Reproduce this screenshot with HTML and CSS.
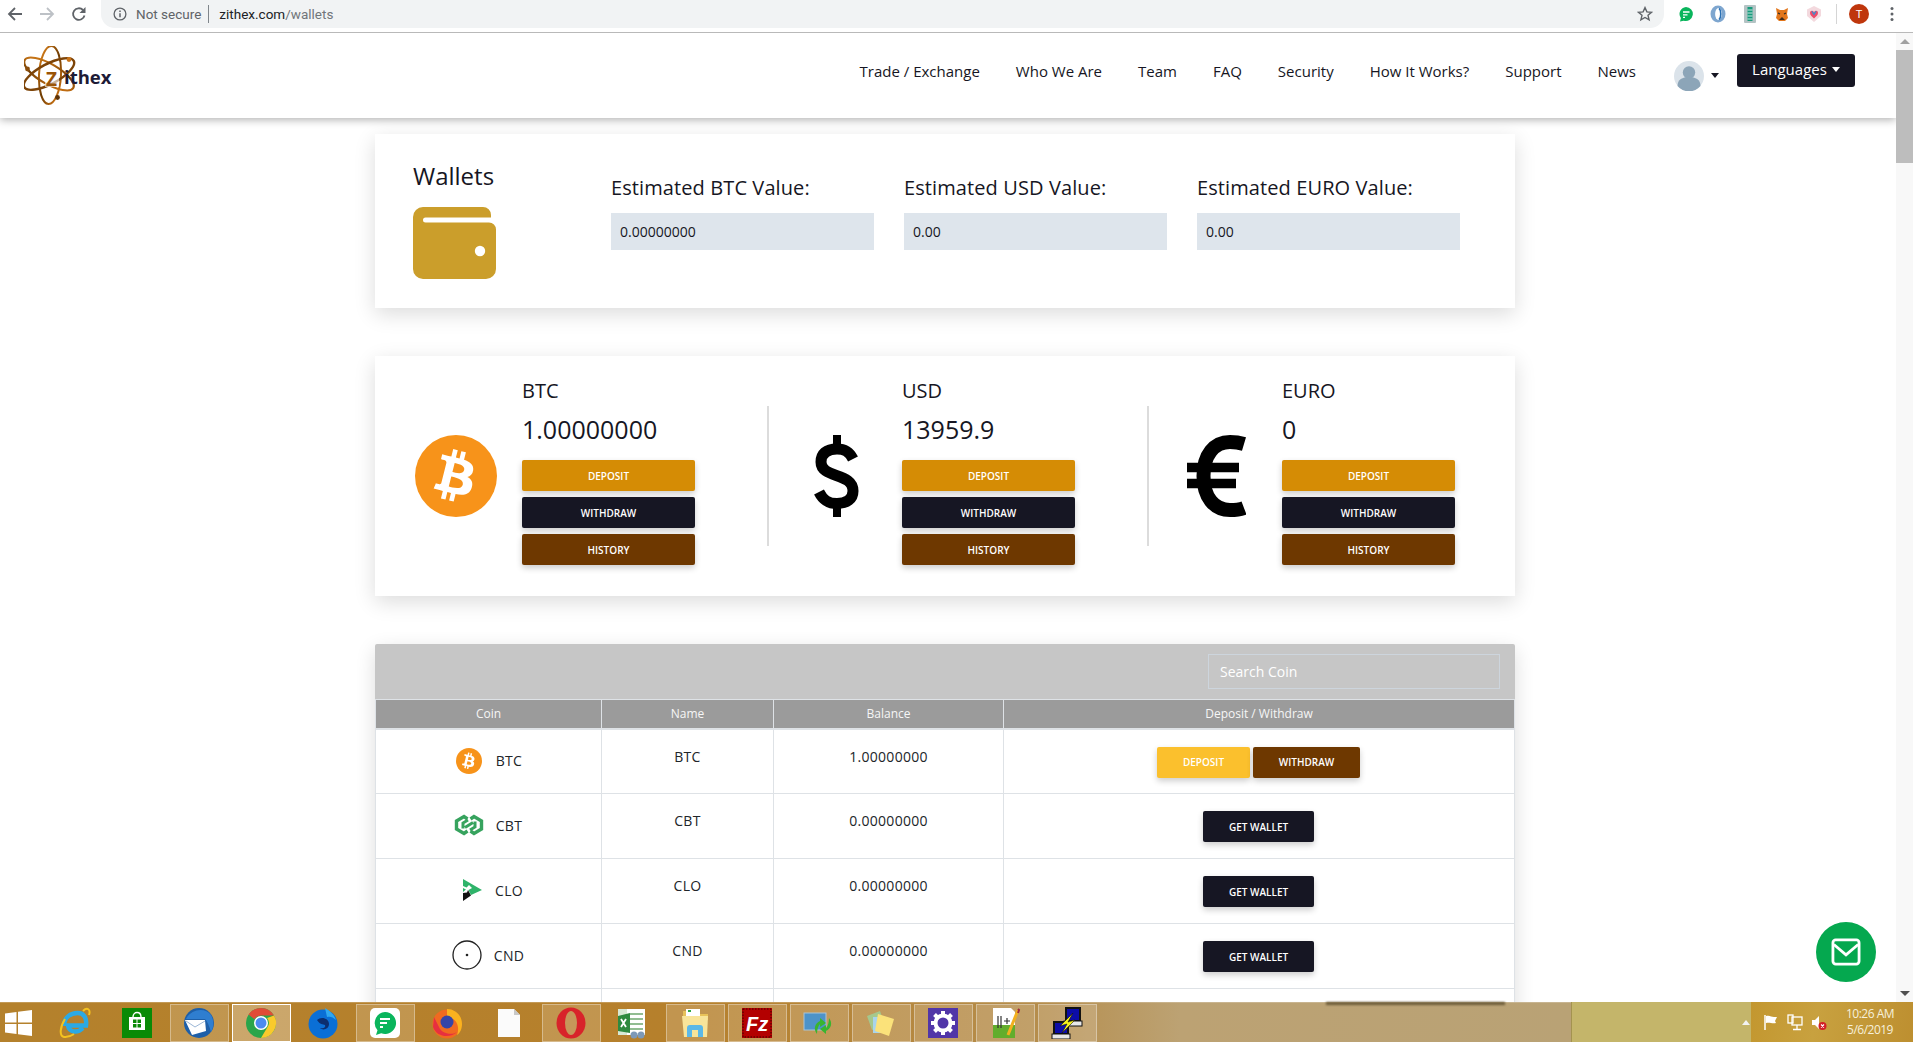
FILE: index.html
```html
<!DOCTYPE html>
<html lang="en">
<head>
<meta charset="utf-8">
<title>Zithex wallets</title>
<link rel="stylesheet" href="styles.css">
</head>
<body>
<svg class="sprite" aria-hidden="true">
  <symbol id="btc" viewBox="0 0 100 100">
    <circle cx="50" cy="50" r="50" fill="#f7931a"/>
    <path fill="#fff" transform="translate(50 50) rotate(14) scale(.178) translate(-140 -180)" d="M217.021,167.042c18.631-9.483,30.288-26.184,27.565-54.007c-3.667-38.023-36.526-50.773-78.006-54.404l-0.008-52.741h-32.139l-0.009,51.354c-8.456,0-17.076,0.166-25.657,0.338L109.19,5.897l-32.11-0.003l-0.006,52.728c-6.959,0.142-13.793,0.277-20.466,0.277v-0.156l-44.33-0.018l0.006,34.282c0,0,23.734-0.446,23.343,0c13.013,0.009,17.262,7.559,18.484,14.076l0.01,60.083v84.397c-0.573,4.09-2.984,10.625-12.083,10.637c0.414,0.364-23.379,0-23.379,0l-6.375,38.335h41.817c7.792,0.009,15.448,0.13,22.959,0.19l0.028,53.338l32.102,0.009l-0.009-52.779c8.832,0.18,17.357,0.258,25.684,0.247l-0.009,52.532h32.138l0.018-53.249c54.022-3.1,91.842-16.697,96.544-67.385C266.916,192.612,247.692,174.396,217.021,167.042z M109.535,95.294c18.126,0,75.132-5.767,75.14,32.064c-0.008,36.269-56.996,32.032-75.14,32.032V95.294z M109.521,262.393l0.014-70.664c21.778-0.006,90.085-6.261,90.094,35.32C199.638,266.932,131.313,262.388,109.521,262.393z"/>
  </symbol>
</svg>
<div class="window">
  <div class="chrome">
    <div class="chrome-nav">
      <svg class="cn" viewBox="0 0 16 16"><path d="M15 8H2M8 2L2 8l6 6" fill="none" stroke="#5f6368" stroke-width="1.8"/></svg>
      <svg class="cn" viewBox="0 0 16 16"><path d="M1 8h13M8 2l6 6-6 6" fill="none" stroke="#bdc1c6" stroke-width="1.8"/></svg>
      <svg class="cn" viewBox="0 0 16 16"><path d="M13.5 9.5A5.8 5.8 0 1 1 12 4" fill="none" stroke="#5f6368" stroke-width="1.8"/><path d="M14.5 1v6h-6z" fill="#5f6368"/></svg>
    </div>
    <div class="omnibox">
      <svg class="info" viewBox="0 0 14 14"><circle cx="7" cy="7" r="5.9" fill="none" stroke="#5f6368" stroke-width="1.3"/><path d="M7 6.2v4M7 3.6v1.4" stroke="#5f6368" stroke-width="1.5"/></svg>
      <span class="not-secure">Not secure</span>
      <span class="omni-sep"></span>
      <span class="url">zithex.com<span class="url-path">/wallets</span></span>
      <svg class="star" viewBox="0 0 16 16"><path d="M8 1.6l1.9 4.3 4.6.4-3.5 3 1.1 4.6L8 11.5l-4.1 2.4 1.1-4.6-3.5-3 4.6-.4z" fill="none" stroke="#5f6368" stroke-width="1.4"/></svg>
    </div>
    <div class="extensions">
      <svg class="ext" viewBox="0 0 18 18"><path d="M9 2a7 7 0 1 1-2.200 13.700L3 16.500l.9-3.400A7 7 0 0 1 9 2z" fill="#0ab55c"/><path d="M6 7h6.500M6 9.800h4.500M6 12.400h2" stroke="#fff" stroke-width="1.3"/></svg>
      <svg class="ext" viewBox="0 0 18 18"><ellipse cx="9" cy="9" rx="7.500" ry="8.500" fill="#7ea6cf"/><ellipse cx="9.500" cy="9" rx="3.400" ry="6" fill="#fff"/><path d="M10 3.400c2.400 2 2.400 9 0 11.200" stroke="#2a70b4" stroke-width="1.600" fill="none"/></svg>
      <svg class="ext" viewBox="0 0 18 18"><rect x="3" y="0" width="12" height="18" rx="1" fill="#b4c3c4"/><rect x="6.500" y="2" width="5" height="14" fill="#179a7c"/><path d="M6.500 5h5M6.500 8h5M6.500 11h5M6.500 14h5" stroke="#d6efe8" stroke-width=".9"/></svg>
      <svg class="ext" viewBox="0 0 18 18"><path d="M3 3l4 2h4l4-2-1 6 1 4-3 3H6l-3-3 1-4z" fill="#e2761b"/><path d="M6 15l3-3 3 3z" fill="#3c2a1c"/><path d="M5 8l2 1M13 8l-2 1" stroke="#2b2b2b" stroke-width="1.200"/></svg>
      <svg class="ext" viewBox="0 0 18 18"><path d="M9 1l7 3.400V11l-7 6-7-6V4.400z" fill="#f3d9de"/><path d="M5 8a2 2 0 0 1 4-.6A2 2 0 0 1 13 8c0 2.400-2.400 4-4 5.400C7.400 12 5 10.400 5 8z" fill="#ec4c6a"/><path d="M7 6.400l2 3 2-3" fill="none" stroke="#3c8fd0" stroke-width="1.300"/></svg>
      <span class="ext-sep"></span>
      <span class="profile">T</span>
      <svg class="dots" viewBox="0 0 4 16"><circle cx="2" cy="2.500" r="1.500"/><circle cx="2" cy="8" r="1.500"/><circle cx="2" cy="13.500" r="1.500"/></svg>
    </div>
  </div>

  <div class="viewport">
    <div class="page">
      <header class="site-header">
        <svg class="logo" viewBox="0 0 92 59">
          <defs>
            <linearGradient id="orbit" x1="0" y1="0" x2="1" y2="1">
              <stop offset="0" stop-color="#e88a1e"/><stop offset=".5" stop-color="#6e3b02"/><stop offset="1" stop-color="#e08018"/>
            </linearGradient>
          </defs>
          <ellipse cx="26" cy="29" rx="11" ry="29" transform="rotate(3 26 29)" fill="none" stroke="url(#orbit)" stroke-width="2"/>
          <ellipse cx="25" cy="28" rx="28" ry="10" transform="rotate(30 25 28)" fill="none" stroke="url(#orbit)" stroke-width="2.200"/>
          <ellipse cx="25" cy="28" rx="28" ry="10" transform="rotate(-28 25 28)" fill="none" stroke="#7d4408" stroke-width="2.400"/>
          <circle cx="3.500" cy="23" r="2.400" fill="#8a4d0b"/>
          <circle cx="45" cy="13.500" r="2.400" fill="#c9741a"/>
          <circle cx="33.500" cy="51.500" r="2.400" fill="#5d3206"/>
          <rect x="21" y="24" width="14" height="17" fill="#fff" opacity=".6"/>
          <text class="logo-z" x="22" y="39.500">Z</text>
          <text class="logo-word" x="40" y="38">ithex</text>
        </svg>
        <nav class="site-nav">
          <a class="nav-link">Trade / Exchange</a>
          <a class="nav-link">Who We Are</a>
          <a class="nav-link">Team</a>
          <a class="nav-link">FAQ</a>
          <a class="nav-link">Security</a>
          <a class="nav-link">How It Works?</a>
          <a class="nav-link">Support</a>
          <a class="nav-link">News</a>
        </nav>
        <div class="user-menu">
          <svg class="avatar" viewBox="0 0 30 30"><circle cx="15" cy="15" r="15" fill="#dbe3ea"/><circle cx="15" cy="11.500" r="6.200" fill="#8ca5b8"/><path d="M3.500 25c0-6.500 5-9 11.500-9s11.500 2.500 11.500 9a15 15 0 0 1-23 0z" fill="#8ca5b8"/></svg>
          <span class="caret"></span>
        </div>
        <button class="lang-btn">Languages<span class="caret caret-light"></span></button>
      </header>

      <main class="content">
        <section class="card wallet-card">
          <div class="wallet-head">
            <h1 class="wallet-title">Wallets</h1>
            <svg class="wallet-icon" viewBox="0 0 83 72"><path fill="#cb9e2b" d="M10 0H70a8 8 0 0 1 8 8V10.500H12.500a2.500 2.500 0 0 0 0 5H76a7 7 0 0 1 7 7V62a10 10 0 0 1-10 10H10A10 10 0 0 1 0 62V10A10 10 0 0 1 10 0Z"/><circle cx="67" cy="44" r="5.200" fill="#fff"/></svg>
          </div>
          <div class="estimate">
            <label class="est-label">Estimated BTC Value:</label>
            <div class="est-value">0.00000000</div>
          </div>
          <div class="estimate">
            <label class="est-label">Estimated USD Value:</label>
            <div class="est-value">0.00</div>
          </div>
          <div class="estimate">
            <label class="est-label">Estimated EURO Value:</label>
            <div class="est-value">0.00</div>
          </div>
        </section>

        <section class="card balance-card">
          <div class="balance">
            <div class="balance-icon"><svg class="btc-big"><use href="#btc"/></svg></div>
            <div class="balance-info">
              <div class="balance-code">BTC</div>
              <div class="balance-amount">1.00000000</div>
              <button class="btn btn-block btn-deposit">Deposit</button>
              <button class="btn btn-block btn-dark">Withdraw</button>
              <button class="btn btn-block btn-brown">History</button>
            </div>
            <span class="balance-sep"></span>
          </div>
          <div class="balance">
            <div class="balance-icon">
              <svg class="dollar" viewBox="0 0 45 82"><path d="M39 24C35 16 30 14 23 14 12 14 7 19 7 27 7 44 39 37 39 56 39 64 33 68.500 23 68.500 14 68.500 9 65 5 57" fill="none" stroke="#000" stroke-width="11"/><path d="M23 0V15M23 67V82" stroke="#000" stroke-width="8"/></svg>
            </div>
            <div class="balance-info">
              <div class="balance-code">USD</div>
              <div class="balance-amount">13959.9</div>
              <button class="btn btn-block btn-deposit">Deposit</button>
              <button class="btn btn-block btn-dark">Withdraw</button>
              <button class="btn btn-block btn-brown">History</button>
            </div>
            <span class="balance-sep"></span>
          </div>
          <div class="balance">
            <div class="balance-icon">
              <svg class="euro" viewBox="0 0 59 82"><path d="M57 9C52 7.500 47 7 43 7 27 7 16.500 20 16.500 41S27 75 43 75C48 75 53 74.500 57 73" fill="none" stroke="#000" stroke-width="14"/><path d="M0 32.500H52M0 48.500H49" stroke="#000" stroke-width="9.500"/></svg>
            </div>
            <div class="balance-info">
              <div class="balance-code">EURO</div>
              <div class="balance-amount">0</div>
              <button class="btn btn-block btn-deposit">Deposit</button>
              <button class="btn btn-block btn-dark">Withdraw</button>
              <button class="btn btn-block btn-brown">History</button>
            </div>
          </div>
        </section>

        <section class="card table-card">
          <div class="table-tools">
            <input class="coin-search" type="text" placeholder="Search Coin">
          </div>
          <table class="coin-table">
            <colgroup><col class="col-coin"><col class="col-name"><col class="col-bal"><col></colgroup>
            <thead>
              <tr><th>Coin</th><th>Name</th><th>Balance</th><th>Deposit / Withdraw</th></tr>
            </thead>
            <tbody>
              <tr>
                <td><div class="coin"><span class="coin-slot"><svg class="coin-btc"><use href="#btc"/></svg></span><span class="coin-code">BTC</span></div></td>
                <td>BTC</td><td>1.00000000</td>
                <td class="actions"><button class="btn btn-sm btn-yellow">Deposit</button><button class="btn btn-sm btn-brown btn-wd">Withdraw</button></td>
              </tr>
              <tr>
                <td><div class="coin"><span class="coin-slot"><svg class="coin-cbt" viewBox="0 0 30 22"><path d="M13.500 5L10 2.500 2.500 7V15L10 19.500 13.500 17M16.500 17L20 19.500 27.500 15V7L20 2.500 16.500 5" fill="none" stroke="#37a35e" stroke-width="3.400"/><path d="M9 14.500V9L14 6M21 7.500V13L16 16M11 13.500L19 8.500" fill="none" stroke="#37a35e" stroke-width="3"/></svg></span><span class="coin-code">CBT</span></div></td>
                <td>CBT</td><td>0.00000000</td>
                <td class="actions"><button class="btn btn-sm btn-dark btn-wallet">Get Wallet</button></td>
              </tr>
              <tr>
                <td><div class="coin"><span class="coin-slot"><svg class="coin-clo" viewBox="0 0 20 22"><path d="M1 0L20 11 9 16 6.500 11 10 9 7 6 4.500 8.500 1 7z" fill="#2fb36a"/><path d="M1 9l3 1.500L1 13zM10 10.500l3 .5-3 2z" fill="#2fb36a"/><path d="M1 22V14l4-.5 1-2.500 3 5.500z" fill="#111"/></svg></span><span class="coin-code">CLO</span></div></td>
                <td>CLO</td><td>0.00000000</td>
                <td class="actions"><button class="btn btn-sm btn-dark btn-wallet">Get Wallet</button></td>
              </tr>
              <tr>
                <td><div class="coin"><span class="coin-slot"><svg class="coin-cnd" viewBox="0 0 30 30"><circle cx="15" cy="15" r="14" fill="none" stroke="#222" stroke-width="1.300"/><circle cx="15" cy="15" r="1.300" fill="#222"/></svg></span><span class="coin-code">CND</span></div></td>
                <td>CND</td><td>0.00000000</td>
                <td class="actions"><button class="btn btn-sm btn-dark btn-wallet">Get Wallet</button></td>
              </tr>
              <tr><td></td><td></td><td></td><td></td></tr>
            </tbody>
          </table>
        </section>
      </main>
    </div>
    <div class="scrollbar">
      <span class="sb-up"></span>
      <span class="sb-thumb"></span>
      <span class="sb-down"></span>
    </div>
    <button class="fab" aria-label="Contact">
      <svg viewBox="0 0 32 30" class="fab-icon"><rect x="2" y="2" width="28" height="26" rx="3" fill="none" stroke="#fff" stroke-width="3"/><path d="M3 7l13 11L29 7" fill="none" stroke="#fff" stroke-width="3"/></svg>
    </button>
  </div>

  <footer class="taskbar">
    <div class="tasks">
      <span class="task-shadow"></span>
      <div class="slot start">
        <svg class="ti-start" viewBox="0 0 27 26"><path d="M0 3.500L11.500 2v10.500H0zM13 1.800L27 0v12.500H13zM0 14h11.500v10L0 22.500zM13 14h14v12l-14-1.800z" fill="#fff"/></svg>
      </div>
      <div class="slot">
        <svg class="ti" viewBox="0 0 32 32"><path d="M5 19C5 10 12 6 18.500 6 25 6 28 11 27 18.500H9c1 6.500 9 8.500 15 2.500" fill="none" stroke="#2ba9e4" stroke-width="4.500"/><path d="M24 4C28 0 32 2 30 8M6 12C1 20 0 29 5 30c3 .5 7-1 10-3" fill="none" stroke="#f4c21f" stroke-width="2"/></svg>
      </div>
      <div class="slot">
        <svg class="ti ti-lg" viewBox="0 0 30 30"><rect width="30" height="30" fill="#0a8a06"/><path d="M7 9h16v13H7z" fill="#fff"/><path d="M11 9c0-6 8-6 8 0" fill="none" stroke="#fff" stroke-width="1.400"/><path d="M11 11.500h3.500V15H11zM15.500 11.500H19V15h-3.500zM11 16h3.500v3.500H11zM15.500 16H19v3.500h-3.500z" fill="#0a8a06"/></svg>
      </div>
      <div class="slot">
        <span class="task-btn"><svg class="ti" viewBox="0 0 32 32"><circle cx="16" cy="16" r="15" fill="#1e5fa8"/><path d="M3 12C8 2 22 0 28 8c3 5 3 12 0 17-2-6-3-10-6-13z" fill="#2f7ed0"/><path d="M2 13l20 0 1 11-14 4z" fill="#fff"/><path d="M3 14l9 6 10-6" fill="none" stroke="#9cb7d6" stroke-width="1"/></svg></span>
      </div>
      <div class="slot">
        <span class="task-btn task-active"><svg class="ti" viewBox="0 0 32 32"><circle cx="16" cy="16" r="15" fill="#2aa54a"/><path d="M16 1A15 15 0 0 1 29 8.500H16a7.500 7.500 0 0 0-6.500 3.800L3.500 7.500A15 15 0 0 1 16 1z" fill="#e04b37"/><path d="M29 8.500A15 15 0 0 1 16 31l6.500-11A7.500 7.500 0 0 0 22 11z" fill="#f9ca2c"/><circle cx="16" cy="16" r="7" fill="#fff"/><circle cx="16" cy="16" r="5.500" fill="#4c8bf0"/></svg></span>
      </div>
      <div class="slot">
        <svg class="ti" viewBox="0 0 32 32"><circle cx="16" cy="17" r="14.500" fill="#0a6fd6"/><path d="M18 1c5 3 9 6 11 12-3-3-6-4-9-3z" fill="#2fa8f0"/><path d="M10 13c4-4 12-2 12 4 0 5-6 7-9 4 4 1 6-1 5-3-2-1-5 0-8-5z" fill="#0c2f70"/></svg>
      </div>
      <div class="slot">
        <span class="task-btn"><svg class="ti ti-lg" viewBox="0 0 30 30"><rect width="30" height="30" rx="5" fill="#fff"/><path d="M15 4a11 11 0 1 1-3.800 21.300L6 27l1.500-4.800A11 11 0 0 1 15 4z" fill="#0ab55c"/><path d="M10 11h10M10 15h7M10 19h3" stroke="#fff" stroke-width="2"/></svg></span>
      </div>
      <div class="slot">
        <svg class="ti" viewBox="0 0 32 32"><circle cx="16" cy="17" r="14.500" fill="#f06a20"/><path d="M16 2c8 0 15 6 15 15 0 5-2 9-5 11 3-8 0-17-10-18z" fill="#fbb21e"/><path d="M3 10l5 10c2 6 12 9 18 5-6 6-20 6-24-5z" fill="#e7303f"/><circle cx="16" cy="15" r="6.500" fill="#3545a8"/></svg>
      </div>
      <div class="slot">
        <svg class="ti ti-file" viewBox="0 0 22 28"><path d="M0 0H16L22 6V28H0z" fill="#fbfbfb"/><path d="M16 0V6H22z" fill="#c8c8c8"/></svg>
      </div>
      <div class="slot">
        <span class="task-btn"><svg class="ti" viewBox="0 0 32 32"><ellipse cx="16" cy="16" rx="14.500" ry="15.500" fill="#d8232a"/><ellipse cx="16" cy="16" rx="6" ry="12" fill="#c6975a"/></svg></span>
      </div>
      <div class="slot">
        <svg class="ti" viewBox="0 0 32 32"><rect x="1" y="2" width="22" height="26" fill="#d8e8d4"/><path d="M10 2h18v26H10z" fill="#fff"/><path d="M13 7h13M13 12h13M13 17h13M13 22h13" stroke="#6fa86f" stroke-width="1.500"/><path d="M1 9l12-3v20L1 24z" fill="#2f8a3f"/><path d="M4 12l5 8M9 12l-5 8" stroke="#fff" stroke-width="1.800"/><circle cx="24" cy="28" r="3.500" fill="#7d99b8"/><circle cx="17" cy="28" r="3.500" fill="#7d99b8"/></svg>
      </div>
      <div class="slot">
        <span class="task-btn"><svg class="ti" viewBox="0 0 32 32"><path d="M4 4h10l2 3h13v6H4z" fill="#e8c25a"/><path d="M7 2h14v8H7z" fill="#fff"/><path d="M9 3h3v2H9z" fill="#2fa84a"/><path d="M3 9h26l-1 21H5z" fill="#f8e49a"/><path d="M8 30v-9c0-2 1-3 3-3h10c2 0 3 1 3 3v9h-5v-7h-6v7z" fill="#5bb8e8"/></svg></span>
      </div>
      <div class="slot">
        <span class="task-btn"><svg class="ti ti-lg" viewBox="0 0 30 30"><rect width="30" height="30" fill="#b30000"/><rect x="1" y="1" width="28" height="28" fill="none" stroke="#3a0000" stroke-width="1" stroke-dasharray="1.500 1.500"/><text class="fz" x="4" y="23">Fz</text></svg></span>
      </div>
      <div class="slot">
        <span class="task-btn"><svg class="ti" viewBox="0 0 32 32"><rect x="1" y="6" width="22" height="17" fill="#4d93c9" stroke="#a8c4d8"/><path d="M14 27c-4-5-2-11 3-13v-3l6 5-6 4v-3c-2 2-3 6-3 10z" fill="#39b52f"/><path d="M26 11c4 5 2 11-3 13v3l-6-5 6-4v3c2-2 3-6 3-10z" fill="#39b52f"/></svg></span>
      </div>
      <div class="slot">
        <span class="task-btn"><svg class="ti" viewBox="0 0 32 32"><path d="M2 9l13-5 5 14-13 5z" fill="#9ed39a" opacity=".8"/><rect x="8" y="10" width="12" height="16" fill="#a8d4ec"/><path d="M13 7l16 5-5 17-14-5z" fill="#fbe27a"/></svg></span>
      </div>
      <div class="slot">
        <span class="task-btn"><svg class="ti ti-lg" viewBox="0 0 30 30"><rect width="30" height="30" fill="#5136a8"/><circle cx="15" cy="15" r="7.500" fill="none" stroke="#fff" stroke-width="4"/><path d="M15 3v5M15 22v5M3 15h5M22 15h5M6.500 6.500l3.500 3.500M20 20l3.500 3.500M6.500 23.500l3.500-3.500M20 10l3.500-3.500" stroke="#fff" stroke-width="4"/></svg></span>
      </div>
      <div class="slot">
        <span class="task-btn"><svg class="ti" viewBox="0 0 32 32"><path d="M4 1H22L26 5V31H4z" fill="#fff"/><path d="M4 18H26V31H4z" fill="#62ad2c"/><path d="M9 9v12M12 9v12" stroke="#333" stroke-width="1.200"/><path d="M15 14h6M18 11v6" stroke="#333" stroke-width="1.200"/><path d="M29 3L19 28" stroke="#f2b01e" stroke-width="3"/><path d="M29 2l1 1-1 3" stroke="#9c2b3c" stroke-width="2" fill="none"/></svg></span>
      </div>
      <div class="slot">
        <span class="task-btn"><svg class="ti" viewBox="0 0 32 32"><rect x="15" y="1" width="14" height="13" fill="#0c0ca8" stroke="#111" stroke-width="2"/><rect x="13" y="14" width="18" height="5" fill="#e8e8e8" stroke="#111"/><rect x="3" y="15" width="14" height="12" fill="#0c0ca8" stroke="#111" stroke-width="2"/><rect x="1" y="27" width="18" height="5" fill="#e8e8e8" stroke="#111"/><path d="M22 6L9 19l7-2-5 9 13-13-7 2z" fill="#f5f01e" stroke="#111" stroke-width=".6"/></svg></span>
      </div>
    </div>
    <div class="tray-gap"><span class="tray-up"></span></div>
    <div class="tray">
      <svg class="tray-ico" viewBox="0 0 16 17"><path d="M2 1v15" stroke="#fff" stroke-width="1.500"/><path d="M3 2c4-1 5 1 8 1h3l-2 4 1 2c-4 1-6-1-10 0z" fill="#fff"/></svg>
      <svg class="tray-ico" viewBox="0 0 16 17"><rect x="1" y="1" width="5" height="8" fill="none" stroke="#fff" stroke-width="1.300"/><rect x="5" y="3" width="10" height="8" fill="none" stroke="#fff" stroke-width="1.300"/><path d="M10 11v4M6 15.500h8" stroke="#fff" stroke-width="1.300"/></svg>
      <svg class="tray-ico" viewBox="0 0 16 17"><path d="M1 6h3l4-4v13l-4-4H1z" fill="#fff"/><circle cx="11.500" cy="12" r="4" fill="#d32027"/><path d="M10 10.500l3 3M13 10.500l-3 3" stroke="#fff" stroke-width="1.100"/></svg>
      <div class="clock"><span>10:26 AM</span><span>5/6/2019</span></div>
    </div>
  </footer>
</div>
</body>
</html>
```
FILE: styles.css
```css
* { box-sizing: border-box; }
html, body { margin: 0; padding: 0; height: 100%; overflow: hidden; background: #fff; }
body { font-family: "Open Sans", "Liberation Sans", sans-serif; color: #161623; }
.sprite { width: 0; height: 0; display: block; }
.window { width: 1913px; height: 1042px; display: flex; flex-direction: column; overflow: hidden; }

/* browser toolbar */
.chrome { height: 33px; flex: none; display: flex; align-items: flex-start; background: #fff; border-bottom: 1px solid #b9b9b9; }
.chrome-nav { display: flex; gap: 16px; padding: 6px 0 0 7px; width: 101px; }
.cn { width: 16px; height: 16px; }
.omnibox { width: 1563px; height: 28px; background: #f1f3f4; border-radius: 0 0 14px 14px; display: flex; align-items: center; padding: 0 11px 0 12px; font-family: "Roboto", "Liberation Sans", sans-serif; font-size: 13.5px; }
.info { width: 14px; height: 14px; }
.not-secure { margin-left: 9px; color: #5f6368; }
.omni-sep { width: 1px; height: 18px; background: #80868b; margin: 0 10px 0 7px; }
.url { color: #202124; }
.url-path { color: #70757a; }
.star { width: 16px; height: 16px; margin-left: auto; }
.extensions { display: flex; align-items: center; height: 28px; padding-left: 13px; }
.ext { width: 18px; height: 18px; margin-right: 14px; }
.ext-sep { width: 1px; height: 20px; background: #d5d5d5; margin: 0 12px 0 -1px; }
.profile { width: 20px; height: 20px; border-radius: 50%; background: #bf360c; color: #fff; font: 400 11px "Roboto", sans-serif; display: flex; align-items: center; justify-content: center; }
.dots { width: 4px; height: 16px; margin-left: 21px; fill: #5f6368; }

/* page viewport */
.viewport { flex: 1; min-height: 0; position: relative; display: flex; overflow: hidden; }
.page { flex: 1; min-width: 0; overflow: hidden; }
.scrollbar { width: 17px; flex: none; background: #f8f8f8; display: flex; flex-direction: column; align-items: center; }
.sb-up, .sb-down { height: 17px; flex: none; width: 0; border-left: 5px solid transparent; border-right: 5px solid transparent; }
.sb-up { border-bottom: 5px solid #a0a0a0; margin-top: 6px; height: 5px; }
.sb-down { border-top: 5px solid #505050; height: 5px; margin-top: auto; margin-bottom: 6px; }
.sb-thumb { width: 100%; height: 113px; background: #bdbdbd; margin-top: 6px; }

/* site header */
.site-header { height: 85px; display: flex; align-items: center; background: #fff; padding: 0 41px 0 24px; box-shadow: 0 2px 8px rgba(0,0,0,.3); position: relative; }
.logo { width: 92px; height: 59px; flex: none; }
.logo-z { font: 700 19px "Open Sans", sans-serif; fill: #9a5408; }
.logo-word { font: 700 18.5px "Open Sans", sans-serif; fill: #1d1b36; }
.site-nav { display: flex; gap: 36px; margin: 0 0 9px auto; }
.nav-link { font-size: 15px; line-height: 22px; color: #161623; }
.user-menu { display: flex; align-items: center; margin-left: 38px; }
.avatar { width: 30px; height: 30px; }
.caret { display: inline-block; width: 0; height: 0; border-left: 4.5px solid transparent; border-right: 4.5px solid transparent; border-top: 5px solid #161623; margin-left: 7px; }
.caret-light { border-top-color: #fff; margin-left: 5px; vertical-align: 3px; }
.lang-btn { margin: 0 0 10px 18px; width: 118px; height: 33px; border: 0; border-radius: 3px; background: #161623; color: #fff; font: 400 15px "Open Sans", sans-serif; padding: 0 0 3px; }

/* cards */
.content { width: 1140px; margin-left: 375px; padding-top: 16px; }
.card { background: #fff; box-shadow: 0 6px 20px rgba(0,0,0,.14); }
.wallet-card { height: 174px; display: flex; padding-left: 38px; gap: 30px; }
.wallet-head { width: 168px; padding-top: 24px; }
.wallet-title { margin: 0 0 13px; font-size: 24px; line-height: 36px; font-weight: 400; }
.wallet-icon { display: block; width: 83px; height: 72px; }
.estimate { width: 263px; padding-top: 39px; }
.est-label { display: block; font-size: 20px; line-height: 30px; margin-bottom: 10px; letter-spacing: .1px; }
.est-value { height: 37px; background: #dee5ec; padding-left: 9px; font-size: 14px; line-height: 37px; font-weight: 500; }

.balance-card { margin-top: 48px; height: 240px; display: grid; grid-template-columns: 380px 380px 1fr; padding-left: 14px; }
.balance { display: flex; align-items: center; padding-left: 26px; }
.balance-icon { width: 82px; height: 82px; flex: none; display: flex; align-items: center; justify-content: center; }
.btc-big { width: 82px; height: 82px; }
.dollar { width: 45px; height: 82px; }
.euro { width: 59px; height: 82px; }
.balance-info { width: 173px; margin: 20px 0 0 25px; align-self: flex-start; }
.balance-code { font-size: 20px; line-height: 30px; margin-bottom: 8px; }
.balance-amount { font-size: 25px; line-height: 30px; font-weight: 500; margin-bottom: 16px; }
.balance-sep { width: 2px; height: 140px; background: #dcdcdc; margin-left: auto; }

.btn { display: block; border: 0; border-radius: 2px; color: #fff; font: 600 10px "Open Sans", sans-serif; text-transform: uppercase; height: 31px; padding: 0; box-shadow: 0 3px 6px rgba(0,0,0,.2); }
.btn-block { width: 173px; }
.btn-block + .btn-block { margin-top: 6px; }
.btn-deposit { background: #d58c05; }
.btn-dark { background: #161623; }
.btn-brown { background: #6e3800; }
.btn-yellow { background: #fbc02d; width: 93px; }
.btn-sm { display: inline-block; vertical-align: top; }
.btn-wd { width: 107px; margin-left: 3px; }
.btn-wallet { width: 111px; }

/* table */
.table-card { margin-top: 48px; border-radius: 2px 2px 0 0; }
.table-tools { height: 55px; background: #c6c6c6; display: flex; justify-content: flex-end; padding: 10px 15px 0 0; border-radius: 2px 2px 0 0; }
.coin-search { width: 292px; height: 35px; background: transparent; border: 1px solid #cdd5dd; padding: 0 11px; font: 400 14px "Open Sans", sans-serif; color: #fff; }
.coin-search::placeholder { color: #fff; opacity: 1; }
.coin-table { width: 1140px; table-layout: fixed; border-collapse: collapse; font-size: 14px; }
.col-coin { width: 226px; }
.col-name { width: 172px; }
.col-bal { width: 230px; }
.coin-table th { height: 29px; padding: 0; background: #9b9b9b; color: #f6f6f6; font-size: 12px; font-weight: 400; border: 1px solid #dee2e6; border-bottom-width: 2px; }
.coin-table td { height: 65px; padding: 16px 0 0; vertical-align: top; text-align: center; line-height: 21px; letter-spacing: .3px; color: #212529; border: 1px solid #dee2e6; }
.coin-table td.actions { padding: 17px 1px 0 0; letter-spacing: 0; }
.coin { display: flex; align-items: center; height: 30px; padding-left: 76px; }
.coin-slot { width: 32px; display: flex; justify-content: flex-end; align-items: center; }
.coin-code { width: 30px; margin-left: 10px; white-space: nowrap; display: flex; justify-content: center; }
.coin-btc { width: 26px; height: 26px; margin-right: 2px; }
.coin-cbt { width: 30px; height: 22px; }
.coin-clo { width: 20px; height: 22px; margin-right: 2px; }
.coin-cnd { width: 30px; height: 30px; margin-right: 2px; }

/* floating button */
.fab { position: absolute; right: 37px; bottom: 20px; width: 60px; height: 60px; border: 0; border-radius: 50%; background: #05a84f; display: flex; align-items: center; justify-content: center; padding: 0; }
.fab-icon { width: 32px; height: 28px; }

/* taskbar */
.taskbar { height: 40px; flex: none; display: flex; }
.tasks { width: 1571px; display: flex; position: relative; padding-top: 2px; background: linear-gradient(90deg, #b4812c 0, #b6802c 690px, #b58d4c 1040px, #bca273 1180px, #b9a275 1571px); box-shadow: inset 0 1px 0 rgba(255,255,255,.2); }
.task-shadow { position: absolute; left: 1326px; top: 0; width: 179px; height: 3px; background: #6a5a38; filter: blur(1px); }
.slot { width: 62px; height: 38px; flex: none; display: flex; align-items: center; justify-content: center; }
.start { width: 44px; padding-right: 8px; }
.task-btn { width: 59px; height: 38px; display: flex; align-items: center; justify-content: center; background: rgba(255,255,255,.17); border: 1px solid rgba(255,255,255,.35); }
.task-active { background: rgba(255,255,255,.3); border-color: #fff; }
.ti { width: 32px; height: 32px; }
.ti-lg { width: 30px; height: 30px; }
.ti-file { width: 22px; height: 28px; }
.ti-start { width: 27px; height: 26px; }
.fz { font: 700 italic 20px "Liberation Sans", sans-serif; fill: #fff; }
.tray-gap { width: 180px; background: #c4b56a; display: flex; justify-content: flex-end; align-items: center; box-shadow: inset 1px 0 0 rgba(90,70,20,.3); }
.tray-up { width: 0; height: 0; border-left: 4px solid transparent; border-right: 4px solid transparent; border-bottom: 5px solid #f2f2f2; margin-right: 1px; }
.tray { flex: 1; display: flex; align-items: center; gap: 8px; padding-left: 12px; background: linear-gradient(100deg, #c3972f, #c8a13f 40%, #bd8f30); }
.tray-ico { width: 16px; height: 17px; flex: none; }
.clock { display: flex; flex-direction: column; align-items: center; margin-left: 9px; width: 52px; font: 400 12px/16px "Open Sans", sans-serif; color: #f6f0dc; letter-spacing: -.5px; white-space: nowrap; }
```
